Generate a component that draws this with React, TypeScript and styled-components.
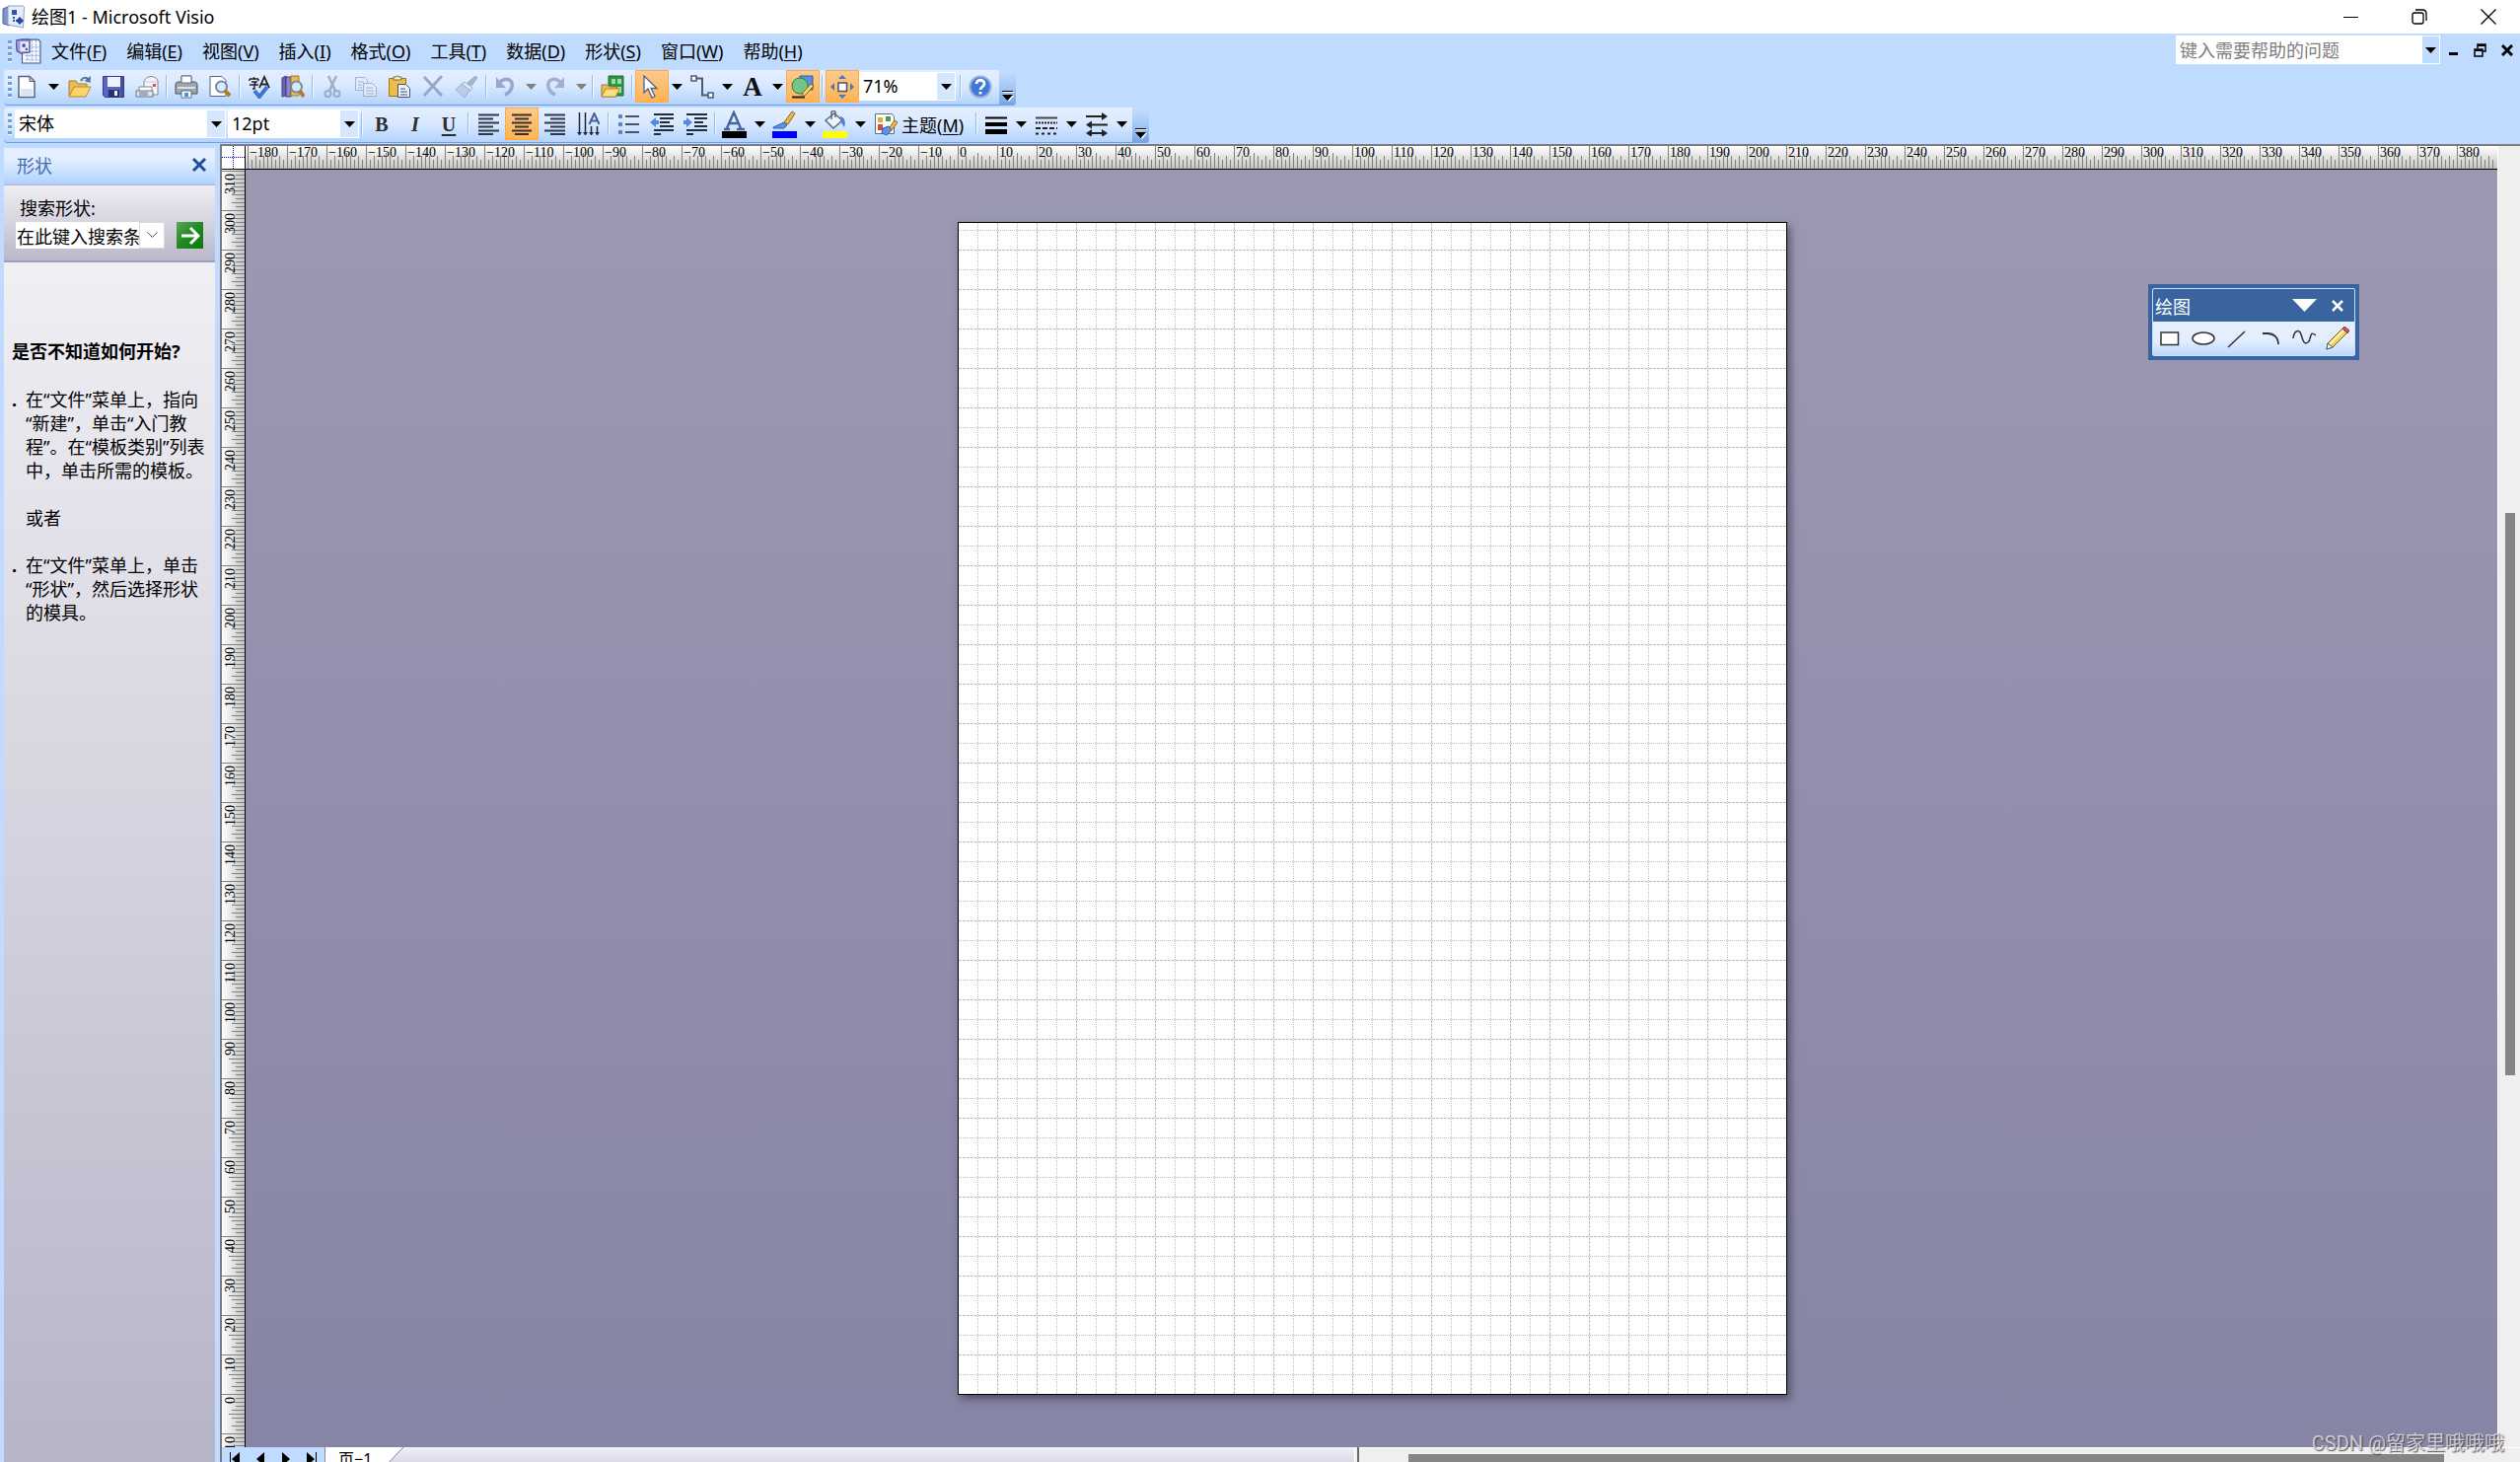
import React from "react";
import styled, { createGlobalStyle, css } from "styled-components";

const UI_FONT = `"Noto Sans", "Noto Sans CJK SC", sans-serif`;
const SERIF = `"Liberation Serif", serif`;

const GlobalStyle = createGlobalStyle`
  *, *::before, *::after { box-sizing: border-box; }
  body { margin: 0; font-family: ${UI_FONT}; font-size: 18px; color: #000; background: #bfdbff; }
  button, input, select { font: inherit; color: inherit; border: 0; margin: 0; padding: 0; background: none; border-radius: 0; outline: 0; }
  ul, p, h2 { margin: 0; padding: 0; }
`;

const Window = styled.div`
  position: relative;
  display: flex;
  flex-direction: column;
  height: 100vh;
  overflow: hidden;
  background: #bfdbff;
`;

/* ---------- title bar ---------- */
const TitleBar = styled.header`
  display: flex;
  align-items: center;
  gap: 6px;
  height: 34px;
  flex: none;
  padding-left: 2px;
  background: #fff;
`;
const Title = styled.span`
  flex: 1;
  font-size: 18px;
  line-height: 34px;
`;
const CaptionButton = styled.button`
  display: grid;
  place-items: center;
  width: 64px;
  height: 34px;
`;

/* ---------- menu bar ---------- */
const MenuBar = styled.nav`
  display: flex;
  align-items: center;
  height: 37px;
  flex: none;
  padding: 0 0 2px 8px;
`;
const Grip = styled.span`
  width: 4px;
  height: 22px;
  flex: none;
  background: repeating-linear-gradient(#6c9fe0 0 3px, #fff 3px 4px, transparent 4px 6px);
`;
const MenuIcon = styled.span`
  display: flex;
  margin: 0 0 0 4px;
`;
const MenuItem = styled.button`
  padding: 0 10px;
  line-height: 34px;
  font-size: 18px;
  u { text-underline-offset: 2px; }
`;
const Spacer = styled.span`
  flex: 1;
`;
const HelpBox = styled.div`
  display: flex;
  width: 268px;
  height: 29px;
  margin-bottom: 2px;
  padding: 1px;
  background: #fff;
  input { flex: 1; min-width: 0; padding-left: 3px; }
  input::placeholder { color: #7d7d7d; opacity: 1; }
`;
const ArrowBox = styled.button`
  display: grid;
  place-items: center;
  width: 17px;
  flex: none;
  background: #bfdbff;
`;
const DocButton = styled.button`
  display: grid;
  place-items: center;
  width: 27px;
  height: 30px;
  margin-bottom: 2px;
`;

/* ---------- tool bars ---------- */
const ToolBars = styled.div`
  display: flex;
  flex-direction: column;
  align-items: flex-start;
  gap: 2px;
  height: 75px;
  flex: none;
  padding-left: 4px;
`;
const Bar = styled.div`
  display: flex;
  align-items: center;
  height: 36px;
  padding: 0 0 2px 4px;
  border-bottom: 1px solid #6a9be0;
  border-radius: 4px;
  background: linear-gradient(#e4efff, #d9e9ff 45%, #c0dbff 80%, #b4d2fb);
`;
const Tool = styled.button<{ $on?: boolean; $dim?: boolean }>`
  display: grid;
  place-items: center;
  width: 34px;
  height: 33px;
  flex: none;
  ${(p) => p.$on && css`border: 1px solid #ffab3f; background: linear-gradient(#fcc98c, #ffb355);`}
  svg { opacity: ${(p) => (p.$dim ? 0.75 : 1)}; }
`;
const Drop = styled.button`
  display: grid;
  place-items: center;
  width: 17px;
  height: 33px;
  flex: none;
`;
const Sep = styled.span`
  width: 2px;
  height: 23px;
  margin: 0 2px;
  flex: none;
  background: linear-gradient(90deg, #8ebcf4 50%, #f5faff 50%);
`;
const Gap = styled.span<{ $w: number }>`
  width: ${(p) => p.$w}px;
  flex: none;
`;
const Letter = styled.span<{ $kind?: "b" | "i" | "u" | "a" }>`
  font-family: ${SERIF};
  font-size: ${(p) => (p.$kind === "a" ? 27 : 20)}px;
  line-height: 24px;
  color: ${(p) => (p.$kind === "a" ? "#111" : "#2c2c2c")};
  font-weight: 700;
  font-style: ${(p) => (p.$kind === "i" ? "italic" : "normal")};
  ${(p) => p.$kind === "u" && css`text-decoration: underline; text-underline-offset: 3px;`}
`;
const Theme = styled.button`
  display: flex;
  align-items: center;
  gap: 4px;
  width: 106px;
  height: 33px;
  padding-left: 5px;
  white-space: nowrap;
  u { text-underline-offset: 2px; }
`;
const ComboWrap = styled.label<{ $w: number }>`
  display: grid;
  width: ${(p) => p.$w}px;
  height: 29px;
  flex: none;
  background: #fff;
  select {
    grid-area: 1 / 1;
    appearance: none;
    width: 100%;
    padding: 0 20px 2px 4px;
    line-height: 26px;
  }
`;
const ComboArrow = styled.span`
  grid-area: 1 / 1;
  justify-self: end;
  display: grid;
  place-items: center;
  width: 18px;
  margin: 1px 1px 1px 0;
  background: #d6e6fc;
  pointer-events: none;
`;
const More = styled.button`
  display: flex;
  flex-direction: column;
  justify-content: flex-end;
  align-items: center;
  width: 17px;
  height: 36px;
  margin-left: 2px;
  padding-bottom: 4px;
  align-self: flex-start;
  flex: none;
  border-radius: 0 4px 4px 0;
  background: linear-gradient(#c6defd, #a4c6f4 50%, #75a3de);
`;

/* ---------- body ---------- */
const Body = styled.div`
  display: flex;
  flex: 1;
  min-height: 0;
`;
const Side = styled.aside`
  display: flex;
  flex-direction: column;
  width: 214px;
  flex: none;
  margin: 4px 5px 0 4px;
`;
const SideHead = styled.div`
  display: flex;
  align-items: center;
  justify-content: space-between;
  height: 38px;
  flex: none;
  padding: 0 8px 3px 13px;
  border-bottom: 1px solid #b6b3ca;
  background: linear-gradient(#e3eeff 30%, #cfe3ff 60%, #aed0ff);
  color: #3f6fae;
  button { display: flex; }
`;
const SearchArea = styled.div`
  display: flex;
  flex-direction: column;
  height: 78px;
  flex: none;
  padding: 9px 12px 0 12px;
  border-bottom: 2px solid #a29cbf;
  background: linear-gradient(#efeef3, #d5d4df 50%, #b9b7ca);
  label { padding-left: 4px; line-height: 28px; height: 28px; }
`;
const SearchRow = styled.div`
  display: flex;
  height: 27px;
  input { width: 125px; padding-left: 1px; background: #fff; }
`;
const SearchDrop = styled.button`
  display: grid;
  place-items: center;
  width: 26px;
  border: 1px solid #d8d8d8;
  background: #fff;
`;
const Go = styled.button`
  display: grid;
  place-items: center;
  width: 27px;
  margin-left: 12px;
  background: linear-gradient(135deg, #5aa65a, #1f8a1f 50%, #0c780c);
`;
const Tips = styled.section`
  flex: 1;
  min-height: 0;
  padding: 78px 2px 0 8px;
  line-height: 24px;
  background: linear-gradient(#f0eff4, #b6b4c7);
  h2 { font-size: 18px; line-height: 24px; font-weight: 700; padding-bottom: 25px; white-space: nowrap; }
  ul { list-style: none; }
  li { display: flex; }
  li::before { content: "."; width: 14px; flex: none; font-weight: 700; }
  p { padding: 24px 0 24px 14px; }
`;

const Work = styled.main`
  display: grid;
  grid-template-columns: 24px minmax(0, 1fr) 23px;
  grid-template-rows: 24px minmax(0, 1fr) 15px;
  flex: 1;
  min-width: 0;
  border-left: 2px solid #7b7b7b;
  border-top: 2px solid #7b7b7b;
`;
const Corner = styled.div`
  border-right: 1px solid #000;
  border-bottom: 1px solid #000;
  background: #fff;
  svg { display: block; }
`;
const TopRuler = styled.div`
  display: flex;
  overflow: hidden;
  padding-left: 2px;
  border-bottom: 1px solid #000;
  background: linear-gradient(#fff, #c4c4c4);
`;
const TopCell = styled.span`
  width: 40px;
  height: 23px;
  flex: none;
  padding-left: 1px;
  border-left: 1px solid #808080;
  font-family: ${SERIF};
  font-size: 14px;
  line-height: 13px;
  background-image: linear-gradient(90deg, #808080 1px, transparent 1px), linear-gradient(90deg, #808080 1px, transparent 1px), linear-gradient(90deg, #808080 1px, transparent 1px);
  background-size: 4px 9px, 8px 13px, 40px 16px;
  background-repeat: repeat-x;
  background-position: -1px 100%, -1px 100%, 19px 100%;
`;
const LeftRuler = styled.div`
  overflow: hidden;
  padding-top: 1px;
  border-right: 1px solid #000;
  background: linear-gradient(90deg, #fff, #c4c4c4);
`;
const LeftCell = styled.div`
  height: 40px;
  padding: 2px 0 0 2px;
  border-top: 1px solid #808080;
  background-image: linear-gradient(#808080 1px, transparent 1px), linear-gradient(#808080 1px, transparent 1px), linear-gradient(#808080 1px, transparent 1px);
  background-size: 9px 4px, 13px 8px, 16px 40px;
  background-repeat: repeat-y;
  background-position: 100% -1px, 100% -1px, 100% 19px;
  span {
    display: block;
    writing-mode: vertical-rl;
    transform: rotate(180deg);
    font-family: ${SERIF};
    font-size: 14px;
    line-height: 13px;
    width: 13px;
  }
`;
const Canvas = styled.div`
  display: flex;
  justify-content: center;
  align-items: flex-start;
  padding-top: 53px;
  overflow: hidden;
  background: linear-gradient(#9b99b2, #8785a5);
`;
const Sheet = styled.div`
  width: 841px;
  height: 1189px;
  flex: none;
  margin-left: 2px;
  border: 1px solid #000;
  background: #fff;
  box-shadow: 3px 4px 8px rgba(40, 38, 60, 0.6);
  svg { display: block; }
`;
const VScroll = styled.div`
  grid-row: 1 / 3;
  grid-column: 3;
  padding: 372px 5px 0 7px;
  border-left: 1px solid #fff;
  background: #efefef;
`;
const VThumb = styled.div`
  height: 570px;
  background: #858585;
`;
const Footer = styled.div`
  grid-column: 1 / 4;
  display: flex;
  align-items: flex-start;
  overflow: hidden;
`;
const PageNav = styled.div`
  display: flex;
  width: 105px;
  height: 24px;
  flex: none;
  border-right: 1px solid #8a8a9a;
  button { width: 26px; height: 24px; display: grid; place-items: center; }
`;
const TabStrip = styled.div`
  display: flex;
  width: 1043px;
  height: 24px;
  flex: none;
  background: linear-gradient(#efeff6, #cfcee0);
`;
const Tab = styled.button`
  display: flex;
  height: 24px;
  padding-left: 13px;
  background: #fff;
  line-height: 24px;
  font-size: 16px;
`;
const TabEdge = styled.svg`
  display: block;
  flex: none;
`;
const Splitter = styled.span`
  width: 5px;
  height: 24px;
  flex: none;
  border-left: 1px solid #fff;
  border-right: 2px solid #6a6a6a;
  background: #efefef;
`;
const HScroll = styled.div`
  flex: 1;
  height: 24px;
  padding: 6px 77px 0 50px;
  border-top: 1px solid #fff;
  background: #efefef;
`;
const HThumb = styled.div`
  height: 10px;
  background: #858585;
`;

/* ---------- floating palette ---------- */
const Palette = styled.section`
  position: absolute;
  top: 288px;
  right: 163px;
  width: 214px;
  padding: 4px;
  background: #3964a0;
`;
const PaletteFrame = styled.div`
  border: 1px solid #c8defc;
  border-radius: 2px;
`;
const PaletteHead = styled.div`
  display: flex;
  align-items: center;
  height: 33px;
  padding: 0 9px 0 2px;
  color: #fff;
  span { flex: 1; }
  button { display: flex; margin-left: 13px; }
`;
const PaletteTools = styled.div`
  display: flex;
  height: 34px;
  background: linear-gradient(#e3eeff 55%, #bcd7fd);
`;
const Watermark = styled.span`
  position: absolute;
  right: 16px;
  bottom: 5px;
  font-family: Roboto, "Noto Sans CJK SC", sans-serif;
  font-size: 20px;
  line-height: 28px;
  color: rgba(225, 225, 230, 0.85);
  text-shadow: 1px 1px 1px rgba(50, 50, 60, 0.8);
`;

/* ---------- drawings ---------- */
const Caret = ({ color = "#000", w = 11, h = 6 }: { color?: string; w?: number; h?: number }) => (
  <svg width={w} height={h} viewBox="0 0 11 6" preserveAspectRatio="none" aria-hidden="true">
    <path d="M0 0h11L5.500 6z" fill={color} />
  </svg>
);

const Pic = ({ children, size = 24 }: { children: React.ReactNode; size?: number }) => (
  <svg width={size} height={size} viewBox="0 0 24 24" fill="none" aria-hidden="true">{children}</svg>
);

const art: Record<string, React.ReactNode> = {
  visio: <><path d="M1 4 8 1v20l-7-2z" fill="#7d94cb" stroke="#4a62a0" /><path d="M6 1h15l1.500 1-1 21L6 20z" fill="#e6ecfa" stroke="#8fa0cc" /><path d="M10 5h5v5h-5z" fill="#3153a4" /><path d="M12 12v4h5" stroke="#3153a4" strokeWidth="2" strokeDasharray="2 1" /><path d="m18 12 4 4-4 4-4-4z" fill="#2346a0" /></>,
  doc: <><path d="M6 1h15l2 2v20H6z" fill="#f4f8ff" stroke="#44597d" /><path d="M9 8h13M9 12h13M9 16h13M9 20h13M11 6v15M15 2v19M19 2v19" stroke="#8fa9d8" strokeDasharray="2 1" /><path d="M0 2 4 1h9v12l-8 1-4-2z" fill="#9a97d4" stroke="#504c91" /><path d="M4 3h8v9H4z" fill="#e8e8fb" /><path d="M6 5h3v3H6zM9 9h2v2H9z" fill="#4b52a6" /></>,
  new: <><path d="M2 1.500h11l5 5v16H2z" fill="#fff" stroke="#55647f" strokeWidth="1.500" /><path d="M4 14h12v7H4z" fill="#dde4f2" /><path d="M13 1.500v5h5z" fill="#b9c5dc" stroke="#55647f" /></>,
  open: <><path d="M1 21V6h7l2 3h9v4" fill="#e8bd55" stroke="#a87a22" /><path d="m1 22 5-10h17l-5 10z" fill="#ffd36b" stroke="#b6882d" /><path d="M13 6c2-4 6-4 8-1" stroke="#55719f" strokeWidth="2" /><path d="m23 1-.5 7-6-2z" fill="#55719f" /></>,
  save: <><path d="M1.500 1.500h21v21h-19l-2-2z" fill="#5a66c4" stroke="#343c8a" /><path d="M6 2h13v10H6z" fill="#eef1fb" /><path d="M19 2h3v20h-3z" fill="#444fa8" /><path d="M7 15h11v7H7z" fill="#2b3066" /><path d="M13 16h3v5h-3z" fill="#eef1fb" /></>,
  mail: <><path d="M9 10V6c2-3 4-4.500 7-4.500S22 3 23 6v14H9z" fill="#f3f5fa" stroke="#7f8796" /><path d="M9 7h14" stroke="#c5cbd8" /><path d="M18 9h3v3h-3z" fill="#dd5336" /><path d="M4 12h13v5H4z" fill="#fff" stroke="#7f8796" /><path d="M1 16h17v6H1z" fill="#dfe5ee" stroke="#68758a" /><path d="M4 18h9M4 20h9" stroke="#68758a" /></>,
  print: <><path d="M7 1h10v8H7z" fill="#fff" stroke="#65707f" /><path d="M1 10c0-2 1-3 3-3h16c2 0 3 1 3 3v9H1z" fill="#9ea5ad" stroke="#4c535c" /><path d="M7 1h10v7H7z" fill="#fff" stroke="#65707f" /><path d="M3 12h18v2H3z" fill="#dce0e4" /><path d="M7 16h10v7H7z" fill="#fff" stroke="#65707f" /><path d="M10 18h4v4h-4z" fill="#3c94e4" /></>,
  preview: <><path d="M2 1.500h12l4 4v16H2z" fill="#fff" stroke="#55647f" /><circle cx="13.500" cy="12" r="5.500" fill="#d7e9fb" stroke="#79889f" strokeWidth="2" /><path d="m17 16 5 5" stroke="#b8762b" strokeWidth="4" /></>,
  spell: <><path d="M2 4h9M6.500 2v2M2 4v2M11 4v2M4 7h5l-2 2v5H5M2 10h9" stroke="#222" strokeWidth="1.400" /><path d="m12 13 5-11 5 11M14 9.500h6" stroke="#222" strokeWidth="1.800" /><path d="m7 16 5 6 8-10" stroke="#3f75d0" strokeWidth="4" /></>,
  research: <><path d="M1 3 5 1v20l-4 1z" fill="#6a64b3" stroke="#423d84" /><path d="M5 2h5v20H5z" fill="#8c87cc" stroke="#423d84" /><path d="M10 1h8v20h-8z" fill="#e6bb55" stroke="#a57b25" /><circle cx="15.500" cy="12" r="5.500" fill="#d7e9fb" stroke="#79889f" strokeWidth="2" /><path d="m19 16 4 6" stroke="#b8762b" strokeWidth="4" /></>,
  cut: <><path d="M8 1 15 16M16 1 9 16" stroke="#8b9bb8" strokeWidth="2.500" /><circle cx="7.500" cy="19" r="3" stroke="#8b9bb8" strokeWidth="2" /><circle cx="16.500" cy="19" r="3" stroke="#8b9bb8" strokeWidth="2" /></>,
  copy: <><path d="M1.500 2.500h9l3 3v10h-12z" fill="#e5edf9" stroke="#8b9fc2" /><path d="M9.500 8.500h9l4 4v9h-13z" fill="#e5edf9" stroke="#8b9fc2" /><path d="M4 7h6M4 10h4M4 13h4M12 13h7M12 16h8M12 19h8" stroke="#8b9fc2" /></>,
  paste: <><path d="M1.500 3.500h17v18h-17z" fill="#eebc48" stroke="#a37118" /><path d="M6 5V2h2l2-1 2 1h2v3z" fill="#f3f0d8" stroke="#7b6a38" /><path d="M10.500 9.500h8l4 4v9h-12z" fill="#eef4fd" stroke="#42516d" /><path d="M13 14h5M13 17h7M13 20h7" stroke="#42516d" /></>,
  del: <path d="m3 2 18 19M21 1 3 21" stroke="#8294b5" strokeWidth="3" />,
  brush: <><path d="m21 1 2 2-6 8-4-3z" fill="#8fa3c6" stroke="#8093b5" /><path d="m10 7 8 6-2 3-9-7z" fill="#dce6f5" stroke="#8fa0be" /><path d="m7 9 8 7-5 7-9-8z" fill="#b5c5df" stroke="#8fa0be" /></>,
  undo: <><path d="M5 9C9 2 20 3 18 12c-1 4-4 7-7 8" stroke="#7f93bb" strokeWidth="3.500" /><path d="M2 2v11h10z" fill="#7f93bb" /></>,
  redo: <><path d="M17 9C13 2 2 3 4 12c1 4 4 7 7 8" stroke="#8da0c3" strokeWidth="3.500" /><path d="M20 2v11H10z" fill="#8da0c3" /></>,
  shapes: <><path d="M8 1h15v20H8z" fill="#2f9345" stroke="#1c6b30" /><path d="M11 4h4v5h-4zM17 4h4v5h-4zM17 12h4v6h-4z" fill="#9edaa3" /><path d="M1 22V10h6l2 2h7v10z" fill="#e8bd55" stroke="#a87a22" /><path d="m1 22 4-8h14l-4 8z" fill="#ffdf85" stroke="#b6882d" /></>,
  pointer: <path d="M4 1v17l4-4 4 9 3-1.500-4-8h6z" fill="#fff" stroke="#4f628c" strokeWidth="1.300" />,
  connector: <><path d="M6 3.500h6v17h6" stroke="#4c5a72" strokeWidth="2" /><path d="M1 1h5v5H1zM18 18h5v5h-5z" fill="#fff" stroke="#4c5a72" strokeWidth="1.500" /></>,
  draw: <><path d="M9 1h13v14H9z" fill="#5b8fe0" stroke="#2e5ba8" /><circle cx="9" cy="11" r="8" fill="#75c58a" stroke="#2c7d45" /><path d="M1 22.500h13" stroke="#222" strokeWidth="2" /><path d="m12 18 8-9 3 2-8 9-4 2z" fill="#f6d560" stroke="#81621c" /></>,
  pan: <><path d="M8 8h8.500v8.500H8z" fill="#fff" stroke="#3c5584" strokeWidth="1.500" /><path d="m12 0 4 4H8zM12 24l4-4H8zM0 12l4-4v8zM24 12l-4-4v8z" fill="#5276b4" /></>,
  help: <><circle cx="12" cy="12" r="10.500" fill="#3f78dc" stroke="#9aaed2" strokeWidth="2" /><path d="M8 9c0-5 8-5 8 0 0 3-4 3-4 6" stroke="#fff" strokeWidth="2.800" /><path d="M10.500 17h3v2.500h-3z" fill="#fff" /></>,
  left: <path d="M2 2.500h21M2 6.500h15M2 10.500h21M2 14.500h15M2 18.500h21M2 22h15" stroke="#2e3848" strokeWidth="2" />,
  center: <path d="M2 2.500h20M5 6.500h14M2 10.500h20M5 14.500h14M2 18.500h20M5 22h14" stroke="#3b3027" strokeWidth="2" />,
  right: <path d="M1 2.500h21M7 6.500h15M1 10.500h21M7 14.500h15M1 18.500h21M7 22h15" stroke="#2e3848" strokeWidth="2" />,
  vert: <><path d="M2.500 0v23M8.500 0v23M14.500 14v9M20.500 14v9" stroke="#20252e" strokeWidth="1.500" /><path d="M0 20h5l-2.500 3zM6 20h5l-2.500 3zM12 20h5l-2.500 3zM18 20h5l-2.500 3z" fill="#20252e" /><path d="m12.500 12 5-11 5 11M14.500 8.500h6" stroke="#466097" strokeWidth="2" /></>,
  bullets: <><path d="M9 4h14M9 12h14M9 20h14" stroke="#4b5360" strokeWidth="2" /><circle cx="4" cy="4" r="2.300" fill="#5e82be" /><circle cx="4" cy="12" r="2.300" fill="#5e82be" /><circle cx="4" cy="20" r="2.300" fill="#5e82be" /></>,
  dec: <><path d="M4 2h20M10 6h14M10 10h10M10 14h14M4 18h20M4 22h7" stroke="#222c3a" strokeWidth="2" /><path d="m0 10 6-5v3h3v4H6v3z" fill="#4f8be0" /></>,
  inc: <><path d="M3 2h21M11 6h13M11 10h9M11 14h13M3 18h21M3 22h7" stroke="#222c3a" strokeWidth="2" /><path d="m9 10-6-5v3H0v4h3v3z" fill="#4f8be0" /></>,
  line: <><path d="M1 17 12 12l3 3-3 3H1z" fill="#5b93e6" stroke="#2e62b4" /><path d="m12 12 8-11 3 2-7 11z" fill="#efb64b" stroke="#8d6521" /></>,
  fill: <><path d="m3 10 9-7 8 7-9 8z" fill="#eef4fd" stroke="#5d6b84" strokeWidth="1.500" /><path d="M9 9V2c0-2 4-2 4 0v5" stroke="#5d6b84" strokeWidth="1.500" /><path d="M18 6c4 1 6 5 4 11l-4-6z" fill="#4f83d0" /></>,
  theme: <><path d="M1.500 1.500h17l2 3v17h-19z" fill="#fff" stroke="#5d6b84" /><path d="M4 5h5v5H4z" fill="#e3ab3d" /><path d="M12 4h5v5h-5z" fill="#4a9a4f" /><path d="M4 12h5v6H4z" fill="#d24f35" /><path d="m9 16 6-2 3 4-5 5-5-2z" fill="#5b93e6" stroke="#2e62b4" /><path d="m16 15 5-7 3 2-6 8z" fill="#efb64b" stroke="#8d6521" /></>,
  weight: <path d="M1 4.500h22v2H1zM1 10h22v4H1zM1 17h22v5H1z" fill="#000" />,
  pattern: <><path d="M1 5.500h22" stroke="#444" strokeWidth="2" /><path d="M1 10.500h22" stroke="#222" strokeWidth="2" strokeDasharray="2 1" /><path d="M1 16h22" stroke="#222" strokeWidth="2" strokeDasharray="5 2" /><path d="M1 21.500h22" stroke="#222" strokeWidth="2" strokeDasharray="3 3" /></>,
  arrows: <><path d="M1 4h18M5 12.500h18M5 21h14" stroke="#222" strokeWidth="2" /><path d="m17 0 6 4-6 4zM7 8.500l-6 4 6 4zM7 17l-6 4 6 4zM17 17l6 4-6 4z" fill="#222" /></>,
  rect: <path d="M3 6h17.500v12.500H3z" fill="#fff" stroke="#333" strokeWidth="1.500" />,
  oval: <ellipse cx="12" cy="12" rx="11" ry="6" fill="#fff" stroke="#333" strokeWidth="1.500" />,
  stroke: <path d="M3 21 20 5" stroke="#333" strokeWidth="1.500" />,
  arc: <path d="M4 7h5c6 0 11 4 11 11" stroke="#333" strokeWidth="1.800" />,
  free: <path d="M1 12C2 4 7 2 9 8s3 11 7 8 1-13 8-7" stroke="#333" strokeWidth="1.500" />,
  pencil: <><path d="m1 23 1-6L17 2l5 4L7 21z" fill="#efd45d" stroke="#776027" /><path d="m4 18 14-14" stroke="#fff4b3" strokeWidth="2" /><path d="m17 2 2-2 5 4-2 3z" fill="#c9565e" stroke="#823c42" /><path d="m1 23 1-6 5 4z" fill="#fff" stroke="#555" /></>,
};

const FontColor = ({ color, kind }: { color: string; kind: "A" | "line" | "fill" }) => (
  <svg width="26" height="28" viewBox="0 0 26 28" fill="none" aria-hidden="true">
    {kind === "A" ? <><path d="m5 18 7-16 7 16M8 13h9M2 19h6M15 19h8" stroke="#47669e" strokeWidth="2.400" /></> : <g>{art[kind]}</g>}
    <path d="M0 21h25v7H0z" fill={color} />
  </svg>
);

const Combo = ({ w, label, value }: { w: number; label: string; value: string }) => (
  <ComboWrap $w={w}>
    <select aria-label={label} defaultValue={value}><option>{value}</option></select>
    <ComboArrow><Caret /></ComboArrow>
  </ComboWrap>
);

const T = ({ n, on, dim }: { n: string; on?: boolean; dim?: boolean }) => (
  <Tool $on={on} $dim={dim} aria-label={n}><Pic>{art[n]}</Pic></Tool>
);
const D = ({ dim }: { dim?: boolean }) => (
  <Drop aria-label="more choices"><Caret color={dim ? "#808080" : "#000"} /></Drop>
);
const Overflow = () => (
  <More aria-label="toolbar options">
    <svg width="12" height="12" viewBox="0 0 12 12" aria-hidden="true">
      <path d="M1 2h11v1H1zM2 6h10l-5 6z" fill="#fff" /><path d="M0 1h11v1H0zM0 5h11l-5.500 6z" fill="#000" />
    </svg>
  </More>
);

const menus: [string, string][] = [
  ["文件", "F"], ["编辑", "E"], ["视图", "V"], ["插入", "I"], ["格式", "O"],
  ["工具", "T"], ["数据", "D"], ["形状", "S"], ["窗口", "W"], ["帮助", "H"],
];
const mark = (n: number) => (n < 0 ? `−${-n}` : `${n}`);
const topMarks = Array.from({ length: 57 }, (_, i) => -180 + i * 10);
const leftMarks = Array.from({ length: 33 }, (_, i) => 310 - i * 10);

const Grid = () => (
  <svg width="839" height="1187" viewBox="0 0 839 1187" aria-hidden="true">
    {Array.from({ length: 41 }, (_, i) => i + 1).map((i) => (
      <path key={`v${i}`} d={`M${i * 20 - 0.5} 0V1187`} stroke="#bdbdbd" strokeDasharray={i % 2 ? "1 1" : "3 1"} />
    ))}
    {Array.from({ length: 59 }, (_, i) => i + 1).map((i) => (
      <path key={`h${i}`} d={`M0 ${1187.5 - i * 20}H839`} stroke="#bdbdbd" strokeDasharray={i % 2 ? "1 1" : "3 1"} />
    ))}
  </svg>
);

export default function App() {
  return (
    <Window>
      <GlobalStyle />
      <TitleBar>
        <Pic>{art.visio}</Pic>
        <Title>绘图1 - Microsoft Visio</Title>
        <CaptionButton aria-label="minimize"><svg width="15" height="15"><path d="M0 7.500h15" stroke="#000" /></svg></CaptionButton>
        <CaptionButton aria-label="restore">
          <svg width="16" height="16" fill="none" stroke="#000" strokeWidth="1.300"><rect x="1" y="4" width="11" height="11" rx="2" /><path d="M4 1h7c3 0 4 1 4 4v7" /></svg>
        </CaptionButton>
        <CaptionButton aria-label="close"><svg width="16" height="16"><path d="m.5.5 15 15m0-15-15 15" stroke="#000" strokeWidth="1.300" /></svg></CaptionButton>
      </TitleBar>

      <MenuBar>
        <Grip />
        <MenuIcon><Pic size={26}>{art.doc}</Pic></MenuIcon>
        {menus.map(([t, k]) => <MenuItem key={k}>{t}(<u>{k}</u>)</MenuItem>)}
        <Spacer />
        <HelpBox>
          <input aria-label="帮助" placeholder="键入需要帮助的问题" />
          <ArrowBox aria-label="recent questions"><Caret /></ArrowBox>
        </HelpBox>
        <DocButton aria-label="minimize drawing"><svg width="13" height="13"><path d="M2 9h9v3H2z" /></svg></DocButton>
        <DocButton aria-label="restore drawing"><svg width="13" height="14" fill="none" stroke="#000" strokeWidth="1.500"><path d="M4 5V1h8v7H9" /><path d="M1 6h8v7H1z" /><path d="M4 2h8M1 7h8" strokeWidth="2" /></svg></DocButton>
        <DocButton aria-label="close drawing"><svg width="12" height="12"><path d="m1 1 10 10M11 1 1 11" stroke="#000" strokeWidth="3" /></svg></DocButton>
      </MenuBar>

      <ToolBars>
        <Bar>
          <Grip />
          <T n="new" /><D /><Gap $w={1} /><T n="open" /><T n="save" /><T n="mail" /><Sep />
          <T n="print" /><T n="preview" /><Sep />
          <T n="spell" /><T n="research" /><Sep />
          <T n="cut" dim /><T n="copy" dim /><T n="paste" /><T n="del" dim /><T n="brush" dim /><Sep />
          <T n="undo" dim /><D dim /><T n="redo" dim /><D dim /><Sep />
          <T n="shapes" /><Sep />
          <T n="pointer" on /><D /><T n="connector" /><D />
          <Tool aria-label="text"><Letter $kind="a">A</Letter></Tool><D />
          <T n="draw" on /><Sep /><T n="pan" on />
          <Combo w={98} label="zoom" value="71%" />
          <Gap $w={2} /><Sep /><T n="help" /><Overflow />
        </Bar>
        <Bar>
          <Grip /><Gap $w={3} />
          <Combo w={214} label="font" value="宋体" /><Gap $w={2} />
          <Combo w={133} label="font size" value="12pt" /><Sep />
          <Tool aria-label="bold"><Letter $kind="b">B</Letter></Tool>
          <Tool aria-label="italic"><Letter $kind="i">I</Letter></Tool>
          <Tool aria-label="underline"><Letter $kind="u">U</Letter></Tool><Sep />
          <T n="left" /><T n="center" on /><T n="right" /><T n="vert" /><Sep />
          <T n="bullets" /><T n="dec" /><T n="inc" /><Sep />
          <Tool aria-label="font color"><FontColor kind="A" color="#000" /></Tool><D />
          <Tool aria-label="line color"><FontColor kind="line" color="#00f" /></Tool><D />
          <Tool aria-label="fill color"><FontColor kind="fill" color="#ff0" /></Tool><D />
          <Theme><Pic>{art.theme}</Pic><span>主题(<u>M</u>)</span></Theme><Sep />
          <T n="weight" /><D /><T n="pattern" /><D /><T n="arrows" /><D /><Overflow />
        </Bar>
      </ToolBars>

      <Body>
        <Side>
          <SideHead>
            <span>形状</span>
            <button aria-label="close shapes"><svg width="16" height="14"><path d="m2 1 12 12M14 1 2 13" stroke="#1d4f99" strokeWidth="3" /></svg></button>
          </SideHead>
          <SearchArea>
            <label htmlFor="shape-search">搜索形状:</label>
            <SearchRow>
              <input id="shape-search" defaultValue="在此键入搜索条件" />
              <SearchDrop aria-label="search history"><svg width="11" height="7" fill="none"><path d="m.5.5 5 5 5-5" stroke="#555" /></svg></SearchDrop>
              <Go aria-label="search"><svg width="20" height="20" fill="none" stroke="#fff" strokeWidth="3"><path d="M1 10h17M10 2l8 8-8 8" /></svg></Go>
            </SearchRow>
          </SearchArea>
          <Tips>
            <h2>是否不知道如何开始?</h2>
            <ul><li><span>在“文件”菜单上，指向<wbr />“新建”，单击“入门教程”。在“模板类别”列表中，单击所需的模板。</span></li></ul>
            <p>或者</p>
            <ul><li><span>在“文件”菜单上，单击<wbr />“形状”，然后选择形状的模具。</span></li></ul>
          </Tips>
        </Side>

        <Work>
          <Corner><svg width="23" height="23"><path d="M0 11.500h23M11.500 0v23" stroke="#0000e0" strokeDasharray="1 1" /></svg></Corner>
          <TopRuler>{topMarks.map((n) => <TopCell key={n}>{mark(n)}</TopCell>)}</TopRuler>
          <LeftRuler>{leftMarks.map((n) => <LeftCell key={n}><span>{mark(n)}</span></LeftCell>)}</LeftRuler>
          <Canvas><Sheet><Grid /></Sheet></Canvas>
          <VScroll><VThumb /></VScroll>
          <Footer>
            <PageNav>
              <button aria-label="first page"><svg width="10" height="14"><path d="M0 0h1v14H0zM10 0v14L2 7z" /></svg></button>
              <button aria-label="previous page"><svg width="8" height="14"><path d="M8 0v14L0 7z" /></svg></button>
              <button aria-label="next page"><svg width="8" height="14"><path d="M0 0v14l8-7z" /></svg></button>
              <button aria-label="last page"><svg width="10" height="14"><path d="M9 0h1v14H9zM0 0v14l8-7z" /></svg></button>
            </PageNav>
            <TabStrip>
              <Tab>页−1</Tab>
              <TabEdge width="32" height="24"><path d="M0 0h32L9 24H0z" fill="#fff" /><path d="M32 0 9 24" stroke="#7f7da0" /></TabEdge>
            </TabStrip>
            <Splitter />
            <HScroll><HThumb /></HScroll>
          </Footer>
        </Work>
      </Body>

      <Palette aria-label="绘图">
        <PaletteFrame>
          <PaletteHead>
            <span>绘图</span>
            <button aria-label="palette options"><Caret color="#fff" w={25} h={13} /></button>
            <button aria-label="close palette"><svg width="16" height="12"><path d="m3 1 10 10M13 1 3 11" stroke="#fff" strokeWidth="2.500" /></svg></button>
          </PaletteHead>
          <PaletteTools>{["rect", "oval", "stroke", "arc", "free", "pencil"].map((n) => <T key={n} n={n} />)}</PaletteTools>
        </PaletteFrame>
      </Palette>
      <Watermark>CSDN @留家里哦哦哦</Watermark>
    </Window>
  );
}
